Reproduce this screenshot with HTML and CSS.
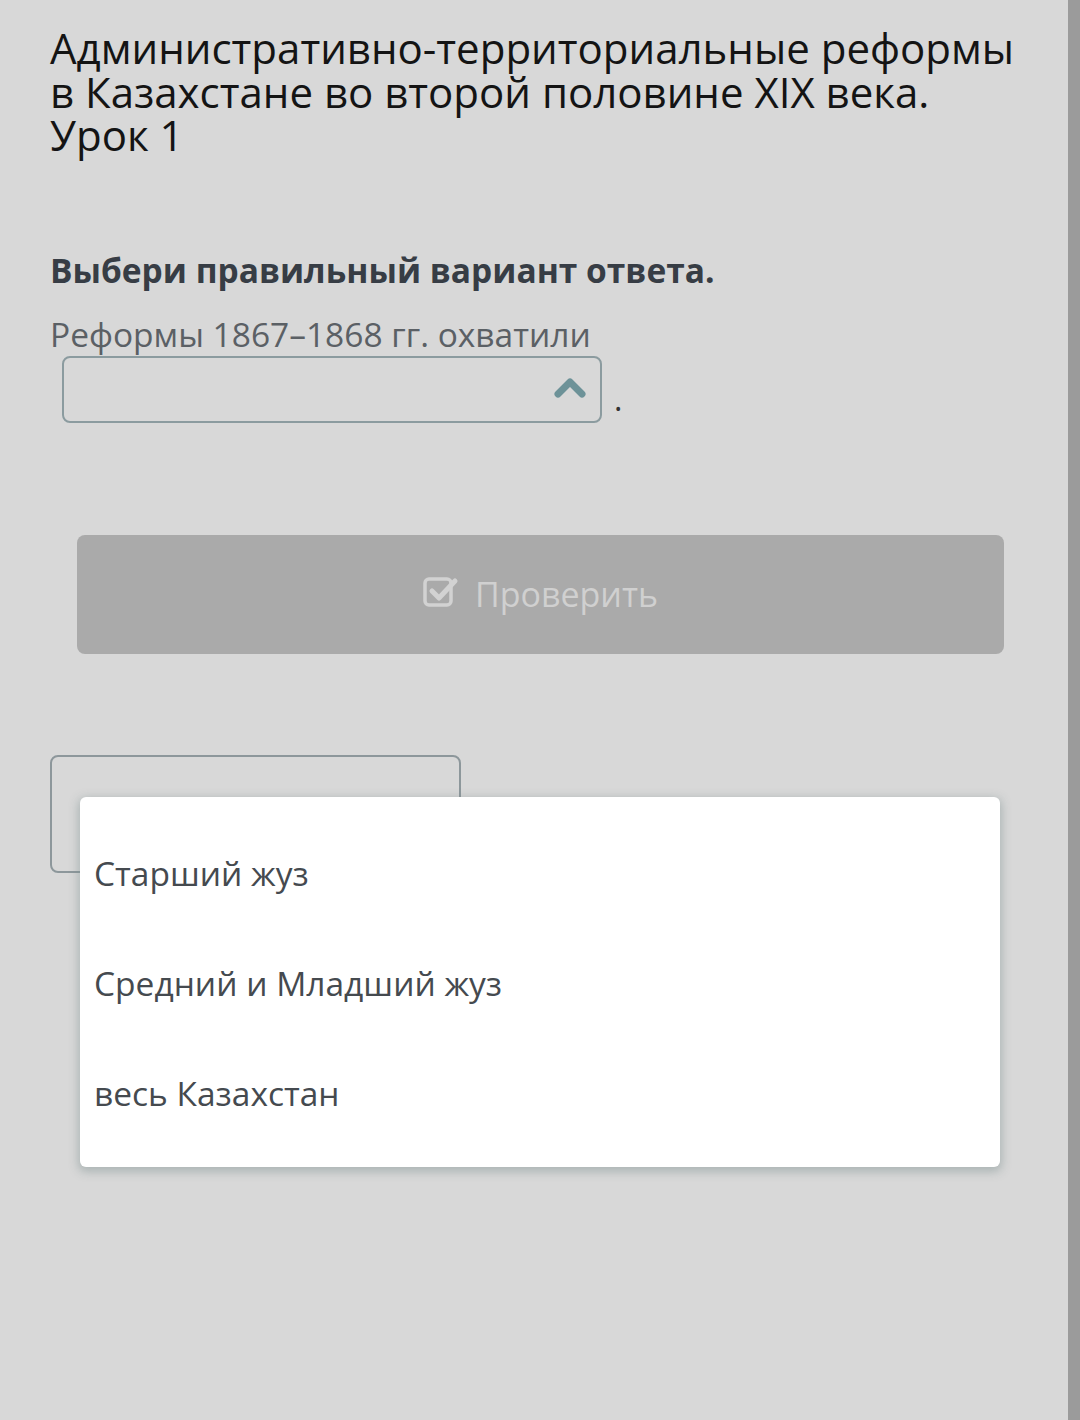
FILE: index.html
```html
<!DOCTYPE html>
<html lang="ru">
<head>
  <meta charset="UTF-8" />
  <title>Урок 1</title>
  <link rel="stylesheet" href="styles.css">
</head>
<body>
  <div class="page">
    <main class="content">
      <h1 class="lesson-title">Административно-территориальные реформы в Казахстане во второй половине XIX века. Урок 1</h1>

      <p class="task-hint">Выбери правильный вариант ответа.</p>

      <div class="question">
        <p class="question-text">Реформы 1867–1868 гг. охватили</p>
        <div class="answer-line">
          <div class="select-box">
            <svg class="chevron" width="32" height="22" viewBox="0 0 32 22">
              <path d="M4 17 L16 5 L28 17" fill="none" stroke="#6d9298" stroke-width="7" stroke-linecap="round" stroke-linejoin="round"/>
            </svg>
          </div>
          <span class="dot">.</span>
        </div>
      </div>

      <div class="check-row">
        <button class="check-btn" disabled>
          <svg width="36" height="32" viewBox="0 0 36 32">
            <rect x="2" y="4" width="26" height="26" rx="4" fill="none" stroke="#d2d2d2" stroke-width="3.5"/>
            <path d="M9 16 L16 23 L32 6" fill="none" stroke="#d2d2d2" stroke-width="5" stroke-linecap="round" stroke-linejoin="round"/>
          </svg>
          <span>Проверить</span>
        </button>
      </div>

      <div class="bottom-area">
        <div class="ghost-box"></div>
        <ul class="options">
          <li>Старший жуз</li>
          <li>Средний и Младший жуз</li>
          <li>весь Казахстан</li>
        </ul>
      </div>
    </main>
    <div class="scrollbar"></div>
  </div>
</body>
</html>
```

FILE: styles.css
```css
body {
  margin: 0;
  background: #d8d8d8;
  font-family: "Open Sans", "Noto Sans", sans-serif;
}
.page {
  display: flex;
  min-height: 1420px;
}
.content {
  flex: 1;
  padding: 26px 0 0 50px;
}
.scrollbar {
  width: 12px;
  background: #9b9b9b;
}
.lesson-title {
  margin: 0;
  font-size: 42px;
  font-weight: 400;
  line-height: 43.5px;
  color: #141414;
  width: 980px;
}
.task-hint {
  margin: 91px 0 0;
  font-size: 33.5px;
  font-weight: 700;
  line-height: 44px;
  color: #373d45;
}
.question {
  margin-top: 20px;
}
.question-text {
  margin: 0;
  font-size: 33.5px;
  line-height: 44px;
  color: #5b6065;
}
.answer-line {
  display: flex;
  align-items: flex-end;
  margin-left: 12px;
}
.select-box {
  width: 540px;
  height: 67px;
  border: 2px solid #8b9b9f;
  border-radius: 8px;
  display: flex;
  align-items: center;
  justify-content: flex-end;
  padding-right: 14px;
  box-sizing: border-box;
}
.chevron {
  margin-top: -2px;
}
.dot {
  font-size: 32px;
  line-height: 32px;
  color: #333;
  margin-left: 12px;
  padding-bottom: 8px;
}
.check-row {
  margin: 112px 0 0 27px;
}
.check-btn {
  width: 927px;
  height: 119px;
  border: none;
  border-radius: 8px;
  background: #aaaaaa;
  display: flex;
  align-items: center;
  justify-content: center;
  gap: 16px;
  font-family: inherit;
  font-size: 34px;
  color: #d0d0d0;
  padding: 0;
}
.check-btn svg {
  margin-top: -6px;
}
.bottom-area {
  position: relative;
  margin-top: 101px;
}
.ghost-box {
  width: 411px;
  height: 118px;
  border: 2px solid #8d979b;
  border-radius: 8px;
  box-sizing: border-box;
}
.options {
  position: absolute;
  top: 42px;
  left: 30px;
  width: 920px;
  height: 370px;
  margin: 0;
  padding: 21px 0 0;
  list-style: none;
  background: #fff;
  border-radius: 6px;
  box-sizing: border-box;
  box-shadow: 0 3px 10px 2px rgba(120, 140, 140, 0.45);
}
.options li {
  padding: 0 14px;
  height: 110px;
  line-height: 110px;
  font-size: 33.5px;
  color: #454a4f;
}
```
